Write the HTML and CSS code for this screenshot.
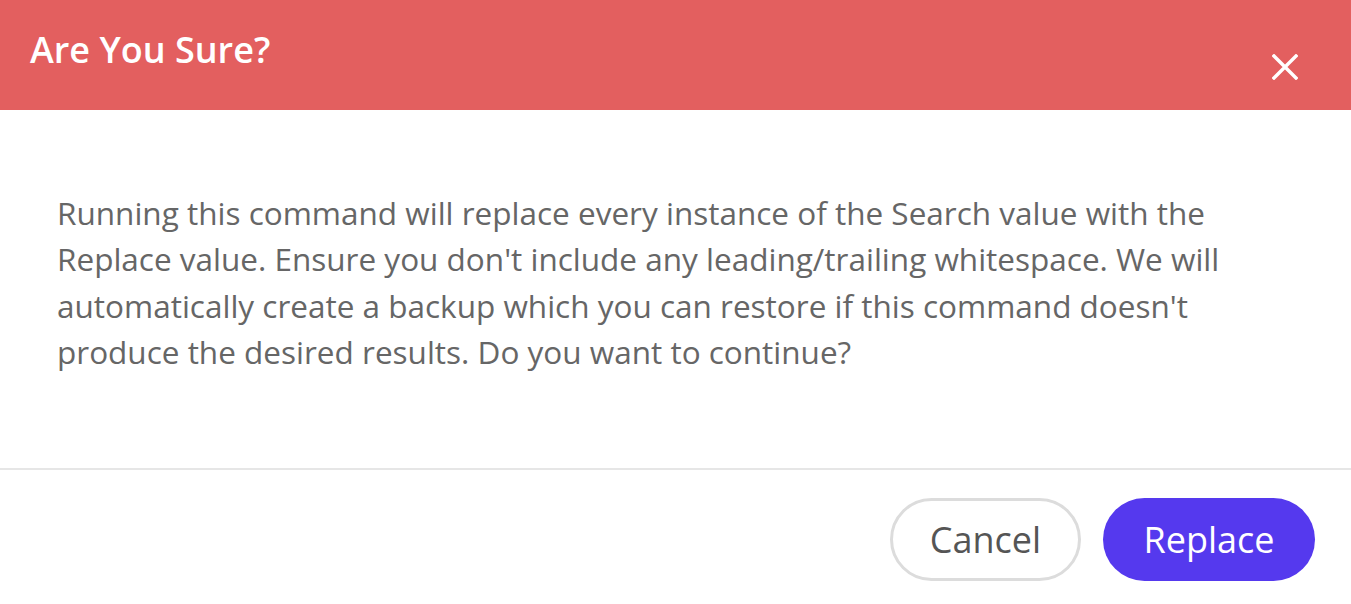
FILE: index.html
```html
<!DOCTYPE html>
<html>
<head>
<meta charset="utf-8">
<link rel="stylesheet" href="styles.css">
</head>
<body>
<div class="modal">
  <div class="header">
    <h1 class="title">Are You Sure?</h1>
    <button class="close" aria-label="Close">
      <svg width="26" height="26" viewBox="0 0 26 26"><path d="M2 2 L24 24 M24 2 L2 24" stroke="#fff" stroke-width="3.4" stroke-linecap="square" fill="none"/></svg>
    </button>
  </div>
  <div class="body">
    <p class="text">Running this command will replace every instance of the Search value with the Replace value. Ensure you don't include any leading/trailing whitespace. We will automatically create a backup which you can restore if this command doesn't produce the desired results. Do you want to continue?</p>
  </div>
  <div class="footer">
    <button class="btn btn-cancel">Cancel</button>
    <button class="btn btn-primary">Replace</button>
  </div>
</div>
</body>
</html>
```
FILE: styles.css
```css
* { box-sizing: border-box; }
html, body { margin: 0; padding: 0; background: #fff; }
body { font-family: "Open Sans", "Liberation Sans", sans-serif; }
.modal { width: 1351px; height: 604px; display: flex; flex-direction: column; }
.header {
  height: 110px;
  flex: none;
  background: #e35f5f;
  display: flex;
  justify-content: space-between;
  align-items: flex-start;
  padding: 0 53px 0 30px;
}
.title {
  margin: 0;
  padding-top: 27px;
  font-size: 36px;
  font-weight: 600;
  color: #fff;
  line-height: 46px;
}
.close {
  margin-top: 54px;
  padding: 0;
  border: 0;
  background: none;
  width: 26px;
  height: 26px;
  display: flex;
}
.body {
  height: 360px;
  flex: none;
  padding: 80px 57px 0 57px;
  border-bottom: 2px solid #e6e6e6;
}
.text {
  margin: 0;
  font-size: 31.5px;
  line-height: 46.3px;
  color: #666;
}
.footer {
  display: flex;
  justify-content: flex-end;
  gap: 22px;
  padding: 28px 36px 0 0;
}
.btn {
  font-family: "Open Sans", "Liberation Sans", sans-serif;
  font-size: 36px;
  height: 83px;
  border-radius: 42px;
  padding: 0;
  cursor: pointer;
}
.btn-cancel {
  background: #fff;
  border: 3px solid #dcdcdc;
  color: #555;
  width: 191px;
}
.btn-primary {
  background: #5539ee;
  border: 0;
  color: #fff;
  width: 212px;
}
```
